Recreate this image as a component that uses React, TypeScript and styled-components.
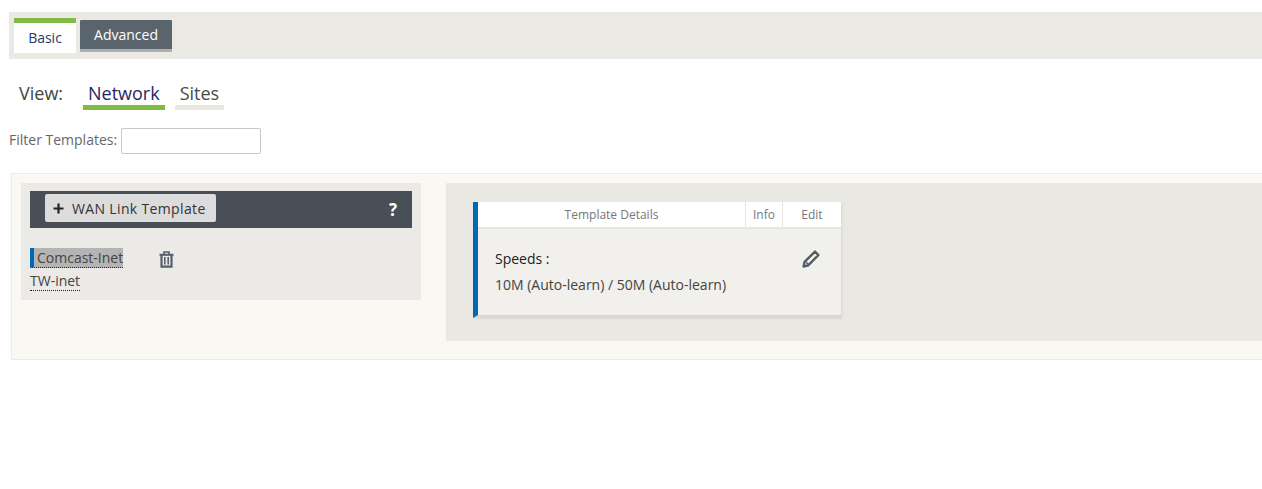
import React from "react";
import styled, { createGlobalStyle } from "styled-components";

const Global = createGlobalStyle`
  html, body { margin: 0; padding: 0; background: #fff; }
  body { font-family: "Open Sans", "Liberation Sans", sans-serif; overflow: hidden; }
`;

const Page = styled.div`
  width: 1262px;
  height: 489px;
  padding-top: 12px;
  box-sizing: border-box;
  overflow: hidden;
`;

const ModeBar = styled.div`
  margin-left: 9px;
  height: 47px;
  margin-bottom: -1px;
  background: #eae9e4;
  display: flex;
  align-items: flex-start;
  padding: 6px 0 0 5px;
  gap: 4px;
  box-sizing: border-box;
`;

const BasicTab = styled.div`
  width: 62px;
  height: 35px;
  box-sizing: border-box;
  background: #fff;
  border-top: 5px solid #7fbc42;
  color: #1f3a6b;
  font-size: 14px;
  text-align: center;
  line-height: 30px;
`;

const AdvancedTab = styled.div`
  width: 92px;
  height: 32px;
  margin-top: 2px;
  box-sizing: border-box;
  background: #5a646d;
  border-bottom: 3px solid #aeaeae;
  color: #fff;
  font-size: 14px;
  text-align: center;
  line-height: 29px;
  border-radius: 1px;
`;

const ViewRow = styled.div`
  display: flex;
  align-items: flex-start;
  height: 52px;
  margin-top: 20px;
  padding-left: 19px;
  font-size: 18px;
`;

const ViewLabel = styled.span`
  color: #444;
  width: 64px;
  line-height: 30px;
`;

const ViewTab = styled.div<{ $active?: boolean }>`
  height: 32px;
  box-sizing: border-box;
  line-height: 30px;
  padding: 0 5px;
  margin-right: 10px;
  color: ${(p) => (p.$active ? "#27265f" : "#4a4a4a")};
  border-bottom: 5px solid ${(p) => (p.$active ? "#7fbc42" : "#e9e8e3")};
`;

const FilterRow = styled.div`
  display: flex;
  align-items: center;
  padding-left: 9px;
  height: 26px;
  margin-top: -2px;
  gap: 4px;
  font-size: 14px;
  color: #666;
`;

const FilterLabel = styled.span`
  line-height: 22px;
  height: 22px;
  margin-bottom: 2px;
`;

const FilterInput = styled.input`
  width: 140px;
  height: 26px;
  box-sizing: border-box;
  border: 1px solid #c8c8c8;
  border-radius: 2px;
  background: #fff;
  outline: none;
`;

const Panel = styled.div`
  margin: 19px 0 0 11px;
  height: 187px;
  box-sizing: border-box;
  background: #f9f8f3;
  border: 1px solid #ecebe6;
  border-right: none;
  padding: 9px 0 0 9px;
  display: flex;
  align-items: flex-start;
  gap: 25px;
`;

const LeftColumn = styled.div`
  width: 400px;
  height: 117px;
  box-sizing: border-box;
  flex: none;
  background: #ebeae6;
  padding: 8px 9px 0;
`;

const ListHeader = styled.div`
  height: 37px;
  background: #484f57;
  display: flex;
  align-items: center;
  justify-content: space-between;
  padding: 0 14px 0 15px;
  margin-bottom: 20px;
`;

const AddButton = styled.div`
  width: 171px;
  height: 28px;
  margin-top: -3px;
  box-sizing: border-box;
  background: #dcdcdc;
  border-radius: 2px;
  display: flex;
  align-items: center;
  padding-left: 8px;
  gap: 8px;
  font-size: 14px;
  letter-spacing: 0.35px;
  color: #333;
  white-space: nowrap;
`;

const Help = styled.span`
  color: #fff;
  font-size: 17px;
  font-weight: 700;
  margin-right: 1px;
`;

const ItemRow = styled.div`
  display: flex;
  align-items: center;
  height: 20px;
  margin-bottom: 3px;
`;

const SelectedItem = styled.span`
  width: 93px;
  height: 20px;
  box-sizing: border-box;
  background: #b4b4b4;
  border-left: 4px solid #0069b4;
  border-bottom: 1px dotted #222;
  padding-left: 3px;
  font-size: 14px;
  line-height: 19px;
  color: #444;
  white-space: nowrap;
`;

const Item = styled.span`
  height: 20px;
  box-sizing: border-box;
  border-bottom: 1px dotted #222;
  font-size: 14px;
  line-height: 19px;
  color: #444;
`;

const TrashButton = styled.span`
  display: flex;
  margin: 3px 0 0 36px;
`;

const RightColumn = styled.div`
  flex: 1;
  height: 158px;
  box-sizing: border-box;
  background: #e9e8e3;
  padding: 19px 0 0 27px;
`;

const Card = styled.div`
  width: 368px;
  height: 116px;
  box-sizing: border-box;
  border-left: 5px solid #0069b4;
  background: #f1f0ec;
  border-bottom: 3px solid #d8d8d0;
  box-shadow: 1px 1px 2px rgba(0, 0, 0, 0.08);
`;

const CardTabs = styled.div`
  display: flex;
  height: 27px;
  box-sizing: border-box;
  background: #fff;
  border-bottom: 2px solid #e6e5e0;
  font-size: 12px;
  color: #777;
  line-height: 25px;
  text-align: center;
`;

const CardTab = styled.div<{ $w?: number }>`
  flex: ${(p) => (p.$w ? `0 0 ${p.$w}px` : "1")};
  box-sizing: border-box;
  & + & {
    border-left: 1px solid #e6e5e0;
  }
`;

const CardBody = styled.div`
  position: relative;
  padding: 20px 0 0 17px;
`;

const SpeedsLabel = styled.div`
  font-size: 14px;
  font-weight: 500;
  line-height: 20px;
  color: #222;
`;

const SpeedsValue = styled.div`
  font-size: 14px;
  line-height: 20px;
  margin-top: 6px;
  color: #444;
`;

const EditIcon = styled.span`
  position: absolute;
  top: 21px;
  right: 21px;
  display: flex;
`;

const Plus = () => (
  <svg width="11" height="11" viewBox="0 0 11 11" aria-hidden>
    <path d="M5.5 0.5v10M0.5 5.5h10" stroke="#222" strokeWidth="2.2" />
  </svg>
);

const Trash = () => (
  <svg width="15" height="17" viewBox="0 0 15 17" fill="none" stroke="#555f69" aria-hidden>
    <path d="M0.5 3.8h14" strokeWidth="2" />
    <path d="M5 3V1h5v2" strokeWidth="1.6" />
    <path d="M2.5 4v11.6h10V4" strokeWidth="2.2" />
    <path d="M5.8 6v7.5M9.2 6v7.5" strokeWidth="1.6" />
  </svg>
);

const Pencil = () => (
  <svg width="18" height="18" viewBox="0 0 18 18" fill="none" stroke="#525c66" aria-hidden>
    <path d="M13 1.6l3.4 3.4L6.2 15.4l-4.6 1.1 1-4.7z" strokeWidth="2.4" strokeLinejoin="round" />
    <path d="M4.3 12.3l1.9 1.9" strokeWidth="1.4" />
  </svg>
);

export default function App() {
  return (
    <Page>
      <Global />
      <ModeBar>
        <BasicTab>Basic</BasicTab>
        <AdvancedTab>Advanced</AdvancedTab>
      </ModeBar>
      <ViewRow>
        <ViewLabel>View:</ViewLabel>
        <ViewTab $active>Network</ViewTab>
        <ViewTab>Sites</ViewTab>
      </ViewRow>
      <FilterRow>
        <FilterLabel>Filter Templates:</FilterLabel>
        <FilterInput />
      </FilterRow>
      <Panel>
        <LeftColumn>
          <ListHeader>
            <AddButton>
              <Plus />
              WAN Link Template
            </AddButton>
            <Help>?</Help>
          </ListHeader>
          <ItemRow>
            <SelectedItem>Comcast-Inet</SelectedItem>
            <TrashButton>
              <Trash />
            </TrashButton>
          </ItemRow>
          <ItemRow>
            <Item>TW-inet</Item>
          </ItemRow>
        </LeftColumn>
        <RightColumn>
          <Card>
            <CardTabs>
              <CardTab>Template Details</CardTab>
              <CardTab $w={37}>Info</CardTab>
              <CardTab $w={59}>Edit</CardTab>
            </CardTabs>
            <CardBody>
              <SpeedsLabel>Speeds :</SpeedsLabel>
              <SpeedsValue>10M (Auto-learn) / 50M (Auto-learn)</SpeedsValue>
              <EditIcon>
                <Pencil />
              </EditIcon>
            </CardBody>
          </Card>
        </RightColumn>
      </Panel>
    </Page>
  );
}
